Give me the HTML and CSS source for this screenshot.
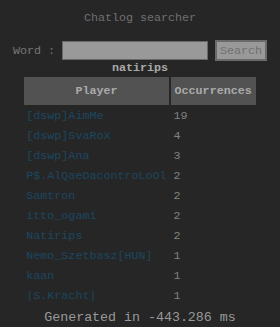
FILE: index.html
```html
<!DOCTYPE html>
<html lang="en">

<head>
    <meta charset="UTF-8">
    <meta name="viewport" content="width=device-width, initial-scale=1.0">
    <link rel="stylesheet" href="styles.css">
    <title>Chatlog searcher</title>
</head>

<body>
    <h1 class="title">Chatlog searcher</h1>

    <form class="searchbox">
        <label for="word">Word :</label>
        <input type="text" id="word">
        <button class="searchbtn">Search</button>
    </form>

    <div class="searched">natirips</div>

    <table class="results">
        <tr>
            <th class="playercol">Player</th>
            <th>Occurrences</th>
        </tr>
        <tr><td class="name">[dswp]AimMe</td><td class="count">19</td></tr>
        <tr><td class="name">[dswp]SvaRoX</td><td class="count">4</td></tr>
        <tr><td class="name">[dswp]Ana</td><td class="count">3</td></tr>
        <tr><td class="name">P$.AlQaeDacontroLoOl</td><td class="count">2</td></tr>
        <tr><td class="name">Samtron</td><td class="count">2</td></tr>
        <tr><td class="name">itto_ogami</td><td class="count">2</td></tr>
        <tr><td class="name">Natirips</td><td class="count">2</td></tr>
        <tr><td class="name">Nemo_Szetbasz[HUN]</td><td class="count">1</td></tr>
        <tr><td class="name">kaan</td><td class="count">1</td></tr>
        <tr><td class="name">|S.Kracht|</td><td class="count">1</td></tr>
    </table>

    <div class="generated">Generated in -443.286 ms</div>
</body>

</html>
```

FILE: styles.css
```css
* {
    padding: 0;
    margin: 0;
}

body {
    background-color: #262626;
    font-family: "Liberation Mono", "Courier New", monospace;
    font-size: 11.7px;
    color: #777;
}

.title {
    font-size: 11.7px;
    font-weight: normal;
    text-align: center;
    color: #707070;
    line-height: 14px;
    padding-top: 11px;
}

.searchbox {
    display: flex;
    justify-content: center;
    align-items: center;
    margin-top: 15px;
    height: 21px;
}

.searchbox label {
    color: #777;
    margin-right: 7px;
}

#word {
    width: 146px;
    height: 19px;
    box-sizing: border-box;
    background-color: #999;
    border: 1px solid #686868;
    margin-right: 7px;
}

.searchbtn {
    width: 52px;
    height: 21px;
    box-sizing: border-box;
    background-color: #999;
    border: 2px solid #6a6a6a;
    color: #707070;
    font-family: inherit;
    font-size: 11.7px;
}

.searched {
    text-align: center;
    font-weight: bold;
    color: #aaa;
    line-height: 14px;
}

.results {
    margin: 0 auto;
    border-spacing: 2px;
}

.results th {
    background-color: #525252;
    color: #aaa;
    height: 28px;
    padding: 0 4px;
    font-size: 11.7px;
}

.results td {
    height: 18px;
    padding: 0 2px;
}

.name {
    color: #1c4661;
}

.count {
    color: #808080;
    padding-left: 3px !important;
}

.generated {
    text-align: center;
    font-size: 13.3px;
    color: #999;
    line-height: 16px;
    margin-top: 3px;
}
```
